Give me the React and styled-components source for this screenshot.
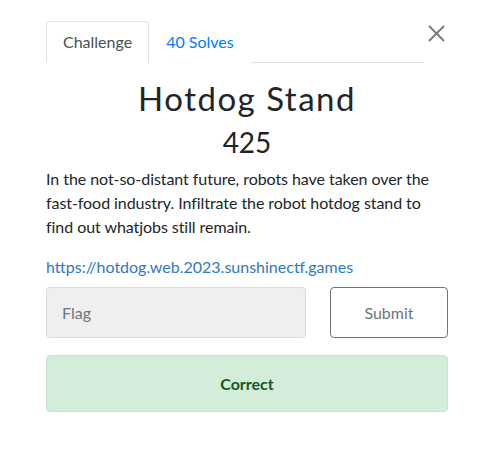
import styled, { createGlobalStyle } from 'styled-components';

const GlobalStyle = createGlobalStyle`
  body {
    margin: 0;
    background: #ffffff;
    font-family: Lato, "Liberation Sans", sans-serif;
    color: #212529;
  }
`;

const Modal = styled.div`
  width: 495px;
  height: 449px;
  box-sizing: border-box;
  padding: 21px 47px 0 46px;
  position: relative;
`;

const CloseButton = styled.button`
  position: absolute;
  top: 25px;
  right: 50px;
  width: 17px;
  height: 17px;
  padding: 0;
  border: none;
  background: none;
  line-height: 0;
  cursor: pointer;
`;

const Tabs = styled.ul`
  display: flex;
  list-style: none;
  margin: 0;
  padding: 0;
  width: 378px;
  border-bottom: 1px solid #dee2e6;
`;

const Tab = styled.li`
  margin-bottom: -1px;
  padding: 8px 16px;
  font-size: 16px;
  line-height: 24px;
  border: 1px solid ${(props) => (props.active ? '#dee2e6' : 'transparent')};
  border-bottom-color: ${(props) => (props.active ? '#ffffff' : 'transparent')};
  border-radius: 4px 4px 0 0;
  color: ${(props) => (props.active ? '#495057' : '#007bff')};
  background: #ffffff;
`;

const Title = styled.h2`
  margin: 16px 0 7px;
  text-align: center;
  font-size: 33px;
  font-weight: 400;
  line-height: 1.2;
  letter-spacing: 1.5px;
  color: #212529;
`;

const Points = styled.h3`
  margin: 0 0 8px;
  text-align: center;
  font-size: 28px;
  font-weight: 400;
  line-height: 1.2;
  color: #212529;
`;

const Description = styled.p`
  margin: 0 0 16px;
  font-size: 16px;
  line-height: 24px;
  letter-spacing: -0.06px;
`;

const Link = styled.a`
  display: block;
  font-size: 16px;
  line-height: 24px;
  color: #3079c0;
  text-decoration: none;
`;

const FlagRow = styled.div`
  display: grid;
  grid-template-columns: 260px 118px;
  column-gap: 24px;
  margin-top: 8px;
`;

const FlagInput = styled.input`
  box-sizing: border-box;
  height: 51px;
  padding: 0 15px;
  border: 1px solid #dcdcdc;
  border-radius: 4px;
  background: #efefef;
  font-family: inherit;
  font-size: 16px;
  color: #495057;

  &::placeholder {
    color: #6c757d;
  }
`;

const SubmitButton = styled.button`
  box-sizing: border-box;
  height: 51px;
  border: 1px solid #6c757d;
  border-radius: 4px;
  background: #ffffff;
  font-family: inherit;
  font-size: 16px;
  color: #6c757d;
  cursor: pointer;
`;

const Alert = styled.div`
  box-sizing: border-box;
  height: 57px;
  margin-top: 17px;
  display: flex;
  align-items: center;
  justify-content: center;
  border: 1px solid #c3e6cb;
  border-radius: 4px;
  background: #d4edda;
  color: #155724;
  font-size: 16px;
  font-weight: 700;
`;

function App() {
  return (
    <>
      <GlobalStyle />
      <Modal>
        <CloseButton title="Close">
          <svg width="17" height="17" viewBox="0 0 17 17">
            <path
              d="M1 1 L16 16 M16 1 L1 16"
              stroke="#777777"
              strokeWidth="1.8"
              fill="none"
            />
          </svg>
        </CloseButton>
        <Tabs>
          <Tab active>Challenge</Tab>
          <Tab>40 Solves</Tab>
        </Tabs>
        <Title>Hotdog Stand</Title>
        <Points>425</Points>
        <Description>
          In the not-so-distant future, robots have taken over the fast-food
          industry. Infiltrate the robot hotdog stand to find out whatjobs
          still remain.
        </Description>
        <Link href="#">https://hotdog.web.2023.sunshinectf.games</Link>
        <FlagRow>
          <FlagInput placeholder="Flag" />
          <SubmitButton>Submit</SubmitButton>
        </FlagRow>
        <Alert>Correct</Alert>
      </Modal>
    </>
  );
}

export default App;
